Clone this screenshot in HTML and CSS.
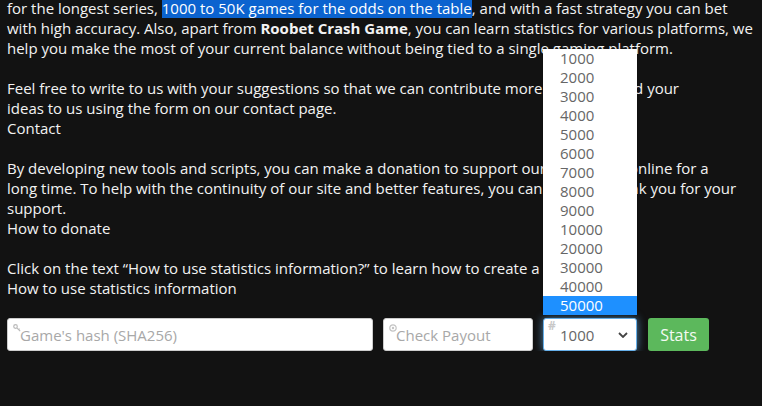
FILE: index.html
```html
<!DOCTYPE html>
<html lang="en">
<head>
    <meta charset="UTF-8">
    <title>Roobet Crash Statistics</title>
    <meta name="viewport" content="width=device-width, initial-scale=1.0">
    <link rel="stylesheet" href="styles.css">
</head>
<body>

    <div class="content">
        <p>
            for the longest series, <span class="selected">1000 to 50K games for the odds on the table</span>, and with a fast strategy you can bet<br>
            with high accuracy. Also, apart from <b>Roobet Crash Game</b>, you can learn statistics for various platforms, we<br>
            help you make the most of your current balance without being tied to a single gaming platform.
        </p>

        <p>
            Feel free to write to us with your suggestions so that we can contribute more. You can send your<br>
            ideas to us using the form on our contact page.<br>
            <a href="#">Contact</a>
        </p>

        <p>
            By developing new tools and scripts, you can make a donation to support our site to stay online for a<br>
            long time. To help with the continuity of our site and better features, you can donate. Thank you for your<br>
            support.<br>
            <a href="#">How to donate</a>
        </p>

        <p>
            Click on the text “How to use statistics information?” to learn how to create a strategy here<br>
            <a href="#">How to use statistics information</a>
        </p>
    </div>

    <form class="tools" onsubmit="return false">
        <div class="field hash">
            <svg class="icon" viewBox="0 0 8 8" width="8" height="8">
                <circle cx="2.5" cy="2.5" r="1.8" fill="none" stroke="#bbb" stroke-width="1.2"/>
                <path d="M3.8 3.8 L7.2 7.2 M5.6 5.6 L6.6 4.6" stroke="#bbb" stroke-width="1.2"/>
            </svg>
            <input type="text" placeholder="Game's hash (SHA256)">
        </div>
        <div class="field payout">
            <svg class="icon" viewBox="0 0 8 8" width="8" height="8">
                <circle cx="4" cy="4" r="3.2" fill="none" stroke="#c4c4c4" stroke-width="1.2"/>
                <circle cx="4" cy="4" r="1.2" fill="#c4c4c4"/>
            </svg>
            <input type="text" placeholder="Check Payout">
        </div>
        <div class="field games">
            <span class="hash-sign">#</span>
            <div class="select">
                <span>1000</span>
                <svg class="chevron" viewBox="0 0 10 6" width="10" height="6">
                    <path d="M1 1 L5 5 L9 1" fill="none" stroke="#444" stroke-width="1.8"/>
                </svg>
            </div>
            <ul class="options">
                <li>1000</li>
                <li>2000</li>
                <li>3000</li>
                <li>4000</li>
                <li>5000</li>
                <li>6000</li>
                <li>7000</li>
                <li>8000</li>
                <li>9000</li>
                <li>10000</li>
                <li>20000</li>
                <li>30000</li>
                <li>40000</li>
                <li class="active">50000</li>
            </ul>
        </div>
        <button type="submit">Stats</button>
    </form>

</body>
</html>
```

FILE: styles.css
```css
body {
    font-family: "Open Sans", "DejaVu Sans", sans-serif;
    font-size: 15px;
    line-height: 20px;
    background: #121212;
    color: #f2f2f2;
    margin: 0;
    padding: 0 7px;
    overflow: hidden;
}
.content {
    margin-top: -2px;
    white-space: nowrap;
}
.content p {
    margin: 0 0 20px;
}
.content p:last-child {
    margin-bottom: 0;
}
.content a {
    color: #f2f2f2;
    text-decoration: none;
}
.selected {
    background: #0b63cf;
    color: #fff;
}
.tools {
    display: flex;
    gap: 10px;
    margin-top: 20px;
    height: 33px;
}
.field {
    position: relative;
    height: 33px;
}
.field input {
    box-sizing: border-box;
    width: 100%;
    height: 33px;
    border: 1px solid #ccc;
    border-radius: 3px;
    padding: 0 0 0 12px;
    font-family: inherit;
    font-size: 15px;
    background: #fff;
}
.field input::placeholder {
    color: #a8a8a8;
}
.hash {
    width: 366px;
}
.payout {
    width: 150px;
}
.games {
    width: 94px;
}
.icon {
    position: absolute;
    left: 6px;
    top: 6px;
}
.hash-sign {
    position: absolute;
    left: 5px;
    top: 1px;
    font-size: 12px;
    line-height: 14px;
    color: #c8c8c8;
    font-weight: bold;
}
.select {
    box-sizing: border-box;
    height: 33px;
    background: #fff;
    border: 1px solid #66afe9;
    border-radius: 3px;
    box-shadow: 0 0 8px rgba(102, 175, 233, 0.7);
    display: flex;
    align-items: center;
    justify-content: space-between;
    padding: 0 8px 0 16px;
    color: #666;
}
.options {
    position: absolute;
    left: 0;
    bottom: calc(100% + 3px);
    width: 94px;
    margin: 0;
    padding: 0;
    list-style: none;
    background: #fff;
    box-shadow: 0 1px 3px rgba(0, 0, 0, 0.3);
}
.options li {
    height: 19px;
    line-height: 19px;
    padding-left: 17px;
    color: #666;
}
.options li.active {
    background: #1e90ff;
    color: #fff;
}
.tools button {
    width: 61px;
    height: 33px;
    margin-left: 1px;
    border: none;
    border-radius: 3px;
    background: #5cb85c;
    color: #f4fbf4;
    font-family: inherit;
    font-size: 16px;
}
```
